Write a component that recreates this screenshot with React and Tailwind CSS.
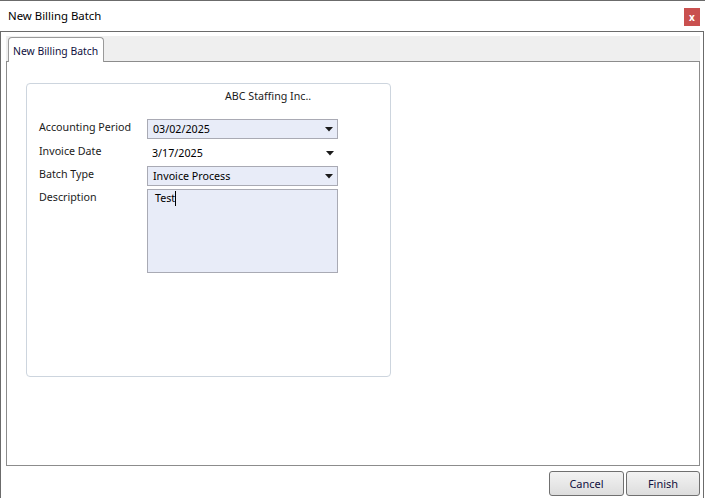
import React from 'react';

const Arrow = () => (
  <svg width="8" height="5" viewBox="0 0 8 5" className="shrink-0">
    <path d="M0 0 H8 L4 4.5 Z" fill="#1a1a1a" />
  </svg>
);

const Row = ({ label, children, className = '' }) => (
  <div className={`flex items-start ${className}`}>
    <div className="w-[108px] h-[16px] leading-[16px] text-[#1b1b1b]">{label}</div>
    {children}
  </div>
);

export default function App() {
  return (
    <div
      className="w-[705px] h-[504px] bg-white text-[10.7px] text-black overflow-hidden"
      style={{ fontFamily: '"Noto Sans", "Open Sans", sans-serif' }}
    >
      {/* Title bar */}
      <div className="h-[31px] border-t border-[#6b6b6b] flex items-start justify-between pl-2 pr-[5px]">
        <span className="mt-[7px] leading-[16px] text-[11.4px]">New Billing Batch</span>
        <button className="mt-[7px] w-[16px] h-[18px] bg-[#c9504f] text-white text-[10px] font-bold leading-[18px] flex items-center justify-center">
          x
        </button>
      </div>

      {/* Body */}
      <div className="h-[467px] mr-[1px] border-t border-l border-r border-[#6b6b6b] pl-[5px] pr-[3px] pt-[4px]">
        {/* Tab strip */}
        <div className="h-[25px] bg-[#efefef] flex items-end pl-[2px]">
          <div className="relative z-10 -mb-px h-[25px] w-[96px] bg-white border border-b-0 border-[#9a9a9a] rounded-t-[4px] pl-[4px] pt-[5px] text-[10.4px] leading-[16px] whitespace-nowrap text-[#101040]">
            New Billing Batch
          </div>
        </div>

        {/* Tab panel */}
        <div className="h-[405px] border border-[#8c8c8c] pl-[19px] pt-[21px]">
          <div className="w-[365px] h-[294px] border border-[#cdd5de] rounded-[4px] pl-[12px] pt-[4px]">
            <div className="h-[16px] leading-[16px] pl-[186px] text-[#1b1b1b]">ABC Staffing Inc..</div>

            <Row label="Accounting Period" className="mt-[15px]">
              <div className="w-[191px] h-[20px] bg-[#e8ecf8] border border-[#a9aab4] flex items-center justify-between pl-[5px] pr-[4px]">
                <span className="leading-[16px]">03/02/2025</span>
                <Arrow />
              </div>
            </Row>

            <Row label="Invoice Date" className="mt-[4px]">
              <div className="w-[191px] h-[20px] flex items-center justify-between pl-[5px] pr-[4px]">
                <span className="leading-[16px]">3/17/2025</span>
                <Arrow />
              </div>
            </Row>

            <Row label="Batch Type" className="mt-[3px]">
              <div className="w-[191px] h-[20px] bg-[#e8ecf8] border border-[#a9aab4] flex items-center justify-between pl-[5px] pr-[4px]">
                <span className="leading-[16px]">Invoice Process</span>
                <Arrow />
              </div>
            </Row>

            <Row label="Description" className="mt-[3px]">
              <div className="w-[191px] h-[84px] bg-[#e8ecf8] border border-[#a9aab4] pl-[7px] pt-0">
                <span className="leading-[16px]">Test</span>
                <span className="inline-block w-px h-[15px] bg-black align-middle -mt-[2px]" />
              </div>
            </Row>
          </div>
        </div>

        {/* Buttons */}
        <div className="flex justify-end gap-[2px] mt-[5px]">
          <button className="w-[75px] h-[25px] border border-[#707070] rounded-[3px] bg-gradient-to-b from-[#f3f3f3] to-[#dddddd] text-[#101040] text-[11px] leading-[16px]">
            Cancel
          </button>
          <button className="w-[74px] h-[25px] border border-[#707070] rounded-[3px] bg-gradient-to-b from-[#f3f3f3] to-[#dddddd] text-[#101040] text-[11px] leading-[16px]">
            Finish
          </button>
        </div>
      </div>
    </div>
  );
}
